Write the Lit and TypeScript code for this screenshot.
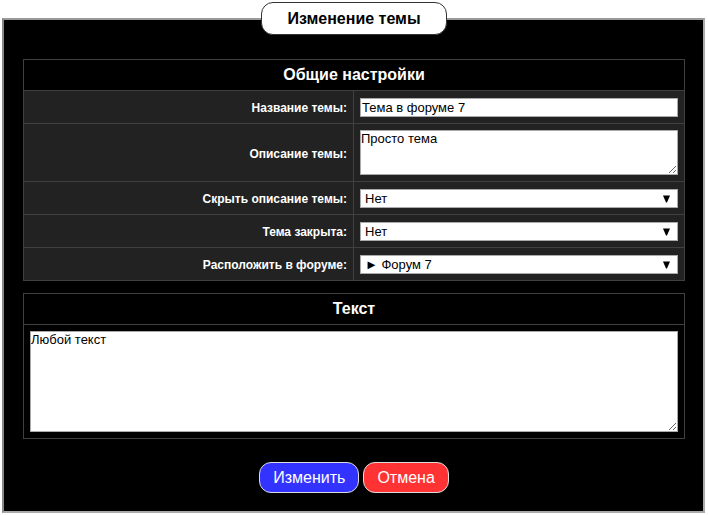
import { LitElement, html, css } from "lit";
import { customElement } from "lit/decorators.js";

@customElement("app-root")
export class AppRoot extends LitElement {
  static styles = css`
    :host {
      display: block;
      padding: 2px 3px 2px 2px;
      font-family: "Liberation Sans", Arial, sans-serif;
      font-size: 12px;
      color: #fff;
    }
    .frame {
      margin: 0;
      min-width: 0;
      padding: 24px 18px 18px 19px;
      border: 2px solid;
      border-color: #999 #aaa #aaa #888;
      background: #000;
    }
    .title {
      box-sizing: border-box;
      height: 33px;
      margin: 0 auto;
      padding: 0 25px;
      border: 1px solid #333;
      border-radius: 12px;
      background: #fff;
      color: #000;
      font-size: 16px;
      font-weight: bold;
      line-height: 32px;
    }
    .box {
      margin-bottom: 12px;
      border: 1px solid #404040;
    }
    .heading {
      margin: 0;
      font-size: 16px;
      line-height: 30px;
      text-align: center;
    }
    .row {
      display: grid;
      grid-template-columns: 1fr 1fr;
      min-height: 32px;
      border-top: 1px solid #404040;
      background: #222;
    }
    .label {
      display: flex;
      align-items: center;
      justify-content: flex-end;
      padding: 2px 6px 0;
      border-right: 1px solid #404040;
      font-weight: bold;
    }
    .cell {
      display: grid;
      align-items: center;
      align-content: end;
      padding: 6px;
    }
    .body {
      display: grid;
      padding: 6px;
      border-top: 1px solid #404040;
    }
    .field {
      box-sizing: border-box;
      width: 100%;
      height: 19px;
      margin: 0;
      padding: 0 1px;
      border: 1px solid #aaa;
      border-radius: 0;
      outline: none;
      background: #fff;
      color: #000;
      font: 13px/16px "Liberation Sans", Arial, sans-serif;
    }
    .area {
      display: block;
      padding: 0;
      resize: both;
    }
    .short {
      height: 45px;
    }
    .tall {
      height: 101px;
    }
    .select {
      appearance: none;
      grid-area: 1 / 1;
      padding: 0 4px;
    }
    .arrow {
      grid-area: 1 / 1;
      justify-self: end;
      margin-right: 8px;
      pointer-events: none;
    }
    .actions {
      display: flex;
      justify-content: center;
      gap: 4px;
      padding-top: 11px;
    }
    .button {
      height: 31px;
      padding: 0 13px;
      border: 1px solid #ddd;
      border-radius: 12px;
      color: #fff;
      font: 16px "Liberation Sans", Arial, sans-serif;
    }
    .save {
      background: #33f;
    }
    .cancel {
      background: #f33;
    }
  `;

  private selectRow(id: string, label: string, value: string) {
    return html`
      <div class="row">
        <label class="label" for=${id}>${label}</label>
        <div class="cell">
          <select class="field select" id=${id}>
            <option>${value}</option>
          </select>
          <svg class="arrow" width="7" height="8" viewBox="0 0 7 8" aria-hidden="true">
            <path d="M0 0.5H7L4 7.5H3Z" fill="#000" />
          </svg>
        </div>
      </div>
    `;
  }

  render() {
    return html`
      <form @submit=${(e: Event) => e.preventDefault()}>
        <fieldset class="frame">
          <legend class="title">Изменение темы</legend>
          <section class="box">
            <h2 class="heading">Общие настройки</h2>
            <div class="row">
              <label class="label" for="name">Название темы:</label>
              <div class="cell">
                <input class="field" id="name" type="text" value="Тема в форуме 7" />
              </div>
            </div>
            <div class="row">
              <label class="label" for="about">Описание темы:</label>
              <div class="cell">
                <textarea class="field area short" id="about" .value=${"Просто тема"}></textarea>
              </div>
            </div>
            ${this.selectRow("hide", "Скрыть описание темы:", "Нет")}
            ${this.selectRow("closed", "Тема закрыта:", "Нет")}
            ${this.selectRow("forum", "Расположить в форуме:", "► Форум 7")}
          </section>
          <section class="box">
            <h2 class="heading" id="text-title">Текст</h2>
            <div class="body">
              <textarea class="field area tall" aria-labelledby="text-title" .value=${"Любой текст"}></textarea>
            </div>
          </section>
          <div class="actions">
            <button class="button save" type="submit">Изменить</button>
            <button class="button cancel" type="button">Отмена</button>
          </div>
        </fieldset>
      </form>
    `;
  }
}
